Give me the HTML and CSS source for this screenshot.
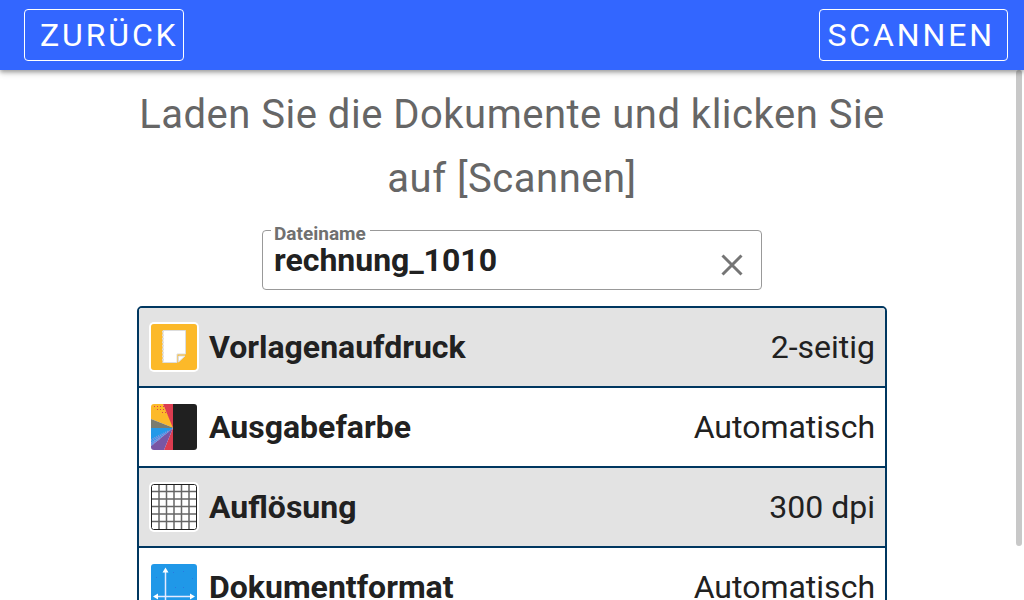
FILE: index.html
```html
<!DOCTYPE html>
<html lang="de">
<head>
<meta charset="utf-8">
<meta name="viewport" content="width=device-width, initial-scale=1">
<title>Scannen</title>
<link rel="stylesheet" href="styles.css">
</head>
<body>
<header class="bar">
  <button class="bar-button back" type="button">ZURÜCK</button>
  <button class="bar-button scan" type="button">SCANNEN</button>
</header>
<main class="content">
  <h1 class="title">Laden Sie die Dokumente und klicken Sie auf [Scannen]</h1>
  <div class="field">
    <label class="field-label" for="filename">Dateiname</label>
    <input class="field-input" id="filename" type="text" value="rechnung_1010" spellcheck="false">
    <button class="clear" type="button" aria-label="Löschen">
      <svg viewBox="0 0 22 22" width="22" height="22"><path d="M1.500 1.500l19 19M20.500 1.500L1.500 20.500" fill="none" stroke="currentColor" stroke-width="3"/></svg>
    </button>
  </div>
  <ul class="settings">
    <li><button class="row" type="button">
      <svg class="icon" viewBox="0 0 46 46"><path fill="#fcb929" d="M0 0h46v46H0z"/><path fill="#fff" stroke="#ddd" d="M12 6.500H34.500V30H26V38.500H12z"/><path fill="none" stroke="#ddd" stroke-width="2" stroke-dasharray="1.500 2" d="M12 7v32"/><path fill="#fff" stroke="#ddd" d="M27.500 38V32H34z"/></svg>
      <span class="name">Vorlagenaufdruck</span><span class="value">2-seitig</span>
    </button></li>
    <li><button class="row" type="button">
      <svg class="icon" viewBox="0 0 46 46"><path fill="#fcb929" d="M0 0h12l11 24L0 15z"/><path fill="#dc3c50" d="M12 0h11v46H13l9-22z"/><path fill="#7b7c70" d="M0 15l23 9H0z"/><path fill="#2499e8" d="M0 24h22L0 42z"/><path fill="#7856a4" d="M22 24L0 42v4h13z"/><path fill="none" stroke="#dc3c50" stroke-dasharray="1 2" d="M3 2.500h10M6 5.500h8M11 8.500h5"/><path fill="none" stroke="#8a94e0" stroke-width="2" stroke-dasharray="1 1" d="M0 36l18-9M0 39l14-9M0 41l9-7"/><path fill="#202020" d="M22 0h24v46H22z"/></svg>
      <span class="name">Ausgabefarbe</span><span class="value">Automatisch</span>
    </button></li>
    <li><button class="row" type="button">
      <svg class="icon" viewBox="0 0 46 46"><path fill="#fff" d="M0 0h46v46H0z"/><path fill="none" stroke="#666" stroke-width="1.500" d="M8 0v46M15.500 0v46M23 0v46M30.500 0v46M38 0v46M0 7.500h46M0 15h46M0 22.500h46M0 30h46M0 37.500h46"/><rect x=".5" y=".5" width="45" height="45" rx="2" fill="none" stroke="#202020"/></svg>
      <span class="name">Auflösung</span><span class="value">300 dpi</span>
    </button></li>
    <li><button class="row" type="button">
      <svg class="icon" viewBox="0 0 46 46"><path fill="#2098e8" d="M0 0h46v46H0z"/><path fill="none" stroke="#e4eaff" stroke-width="1.500" d="M14.500 6v36M5 32.500h36"/><path fill="#fff" d="M14.500 3.500l3 5h-6zM2 32.500l5-3v6zM44 32.500l-5-3v6zM14.500 45l3-5h-6z"/><path fill="#2878e0" d="M5 13h1v1H5zM22 8h1v1h-1zM32 7h1v1h-1zM41 14h1v1h-1zM24 23h1v1h-1zM32 23h1v1h-1z"/></svg>
      <span class="name">Dokumentformat</span><span class="value">Automatisch</span>
    </button></li>
  </ul>
</main>
<div class="scroll-thumb"></div>
</body>
</html>
```
FILE: styles.css
```css
* { box-sizing: border-box; }
body {
  margin: 0;
  height: 100vh;
  display: flex;
  flex-direction: column;
  overflow: hidden;
  background: #fff;
  color: #212121;
  font-family: Roboto, sans-serif;
}
button { font: inherit; color: inherit; cursor: pointer; }
.bar {
  flex: none;
  display: flex;
  justify-content: space-between;
  align-items: center;
  padding: 9px 16px 9px 24px;
  background: #3366ff;
  color: #fff;
  box-shadow: 0 2px 4px rgba(0, 0, 0, 0.3), 0 4px 6px rgba(0, 0, 0, 0.12);
  position: relative;
  z-index: 1;
}
.bar-button {
  height: 52px;
  border: 1px solid #fff;
  border-radius: 4px;
  background: none;
  font-size: 32px;
  line-height: 50px;
  letter-spacing: 0.09em;
}
.back { padding: 0 4px 0 15px; }
.scan { padding: 0 12px 0 7px; }
.content {
  flex: 1;
  min-height: 0;
  overflow: hidden;
  padding: 13px 16px 0;
}
.title {
  max-width: 750px;
  margin: 0 auto;
  color: #666;
  font-size: 40px;
  line-height: 64px;
  font-weight: 400;
  letter-spacing: 0.0125em;
  text-align: center;
}
.field {
  position: relative;
  display: flex;
  align-items: center;
  max-width: 500px;
  height: 60px;
  margin: 19px auto 16px;
  padding: 0 18px 0 11px;
  border: 1px solid #999;
  border-radius: 4px;
}
.field-label {
  position: absolute;
  top: -9px;
  left: 8px;
  padding: 0 4px 0 3px;
  background: #fff;
  color: #707070;
  font-size: 19px;
  line-height: 24px;
  font-weight: 700;
}
.field-input {
  flex: 1;
  min-width: 0;
  padding: 0;
  border: 0;
  outline: 0;
  background: none;
  color: #212121;
  font: 700 32px/58px Roboto, sans-serif;
}
.clear {
  display: flex;
  padding: 10px 0 0;
  border: 0;
  background: none;
  color: #757575;
}
.settings {
  max-width: 750px;
  margin: 0 auto;
  padding: 0;
  list-style: none;
  border: 2px solid #003760;
  border-radius: 5px;
  overflow: hidden;
}
.settings li { border-bottom: 2px solid #003760; }
.settings li:nth-child(odd) { background: #e3e3e3; }
.row {
  display: flex;
  align-items: center;
  width: 100%;
  height: 78px;
  padding: 0 10px 0 12px;
  border: 0;
  background: none;
  font-size: 32px;
  text-align: left;
}
.icon {
  flex: none;
  width: 46px;
  height: 46px;
  margin-right: 12px;
  border-radius: 3px;
  box-shadow: 0 0 0 2px #fff;
}
.name { font-weight: 700; }
.value { margin-left: auto; }
.scroll-thumb {
  position: absolute;
  top: 70px;
  right: 2px;
  width: 6px;
  height: 476px;
  border-radius: 3px;
  background: #c8c8c8;
}
```
